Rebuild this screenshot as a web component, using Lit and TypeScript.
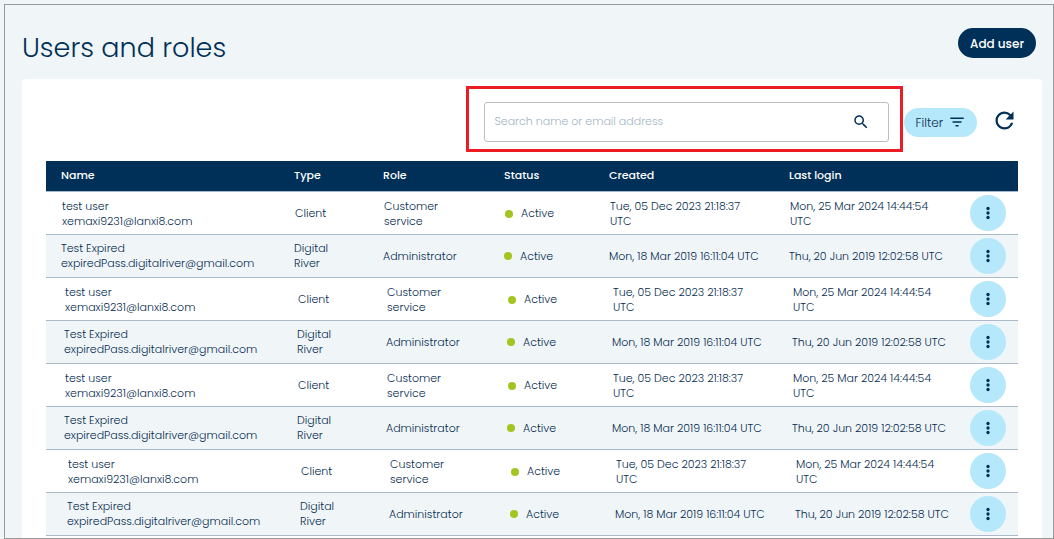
import { LitElement, html, css } from "lit";
import { customElement, state } from "lit/decorators.js";
import { classMap } from "lit/directives/class-map.js";

interface User {
  name: string;
  email: string;
  type: string[];
  role: string[];
  created: string[];
  lastLogin: string[];
}

const testUser: User = {
  name: "test user",
  email: "xemaxi9231@lanxi8.com",
  type: ["Client"],
  role: ["Customer", "service"],
  created: ["Tue, 05 Dec 2023 21:18:37", "UTC"],
  lastLogin: ["Mon, 25 Mar 2024 14:44:54", "UTC"],
};

const expiredUser: User = {
  name: "Test Expired",
  email: "expiredPass.digitalriver@gmail.com",
  type: ["Digital", "River"],
  role: ["Administrator"],
  created: ["Mon, 18 Mar 2019 16:11:04 UTC"],
  lastLogin: ["Thu, 20 Jun 2019 12:02:58 UTC"],
};

const batches: { user: User; step: number }[] = [
  { user: testUser, step: 0 },
  { user: expiredUser, step: 0 },
  { user: testUser, step: 1 },
  { user: expiredUser, step: 1 },
  { user: testUser, step: 1 },
  { user: expiredUser, step: 1 },
  { user: testUser, step: 2 },
  { user: expiredUser, step: 2 },
];

const lines = (parts: string[]) =>
  parts.map((part) => html`<span class="line">${part}</span>`);

@customElement("app-root")
export class AppRoot extends LitElement {
  @state() private query = "";

  static styles = css`
    :host {
      display: block;
      box-sizing: border-box;
      min-height: 100vh;
      padding: 4px 0 0 4px;
      background: #f0f5f8;
      color: #062c50;
      font-family: Poppins, Inter, "Open Sans", sans-serif;
      font-size: 11px;
      font-weight: 300;
      line-height: 15px;
    }
    * {
      box-sizing: border-box;
    }
    button,
    input {
      font: inherit;
      color: inherit;
    }
    button {
      border: 0;
      padding: 0;
      cursor: pointer;
    }
    svg {
      display: block;
      fill: #003057;
    }
    .frame {
      display: flex;
      flex-direction: column;
      min-height: calc(100vh - 4px);
      border: 1px solid #999;
      padding: 0 11px 0 17px;
    }
    .head {
      display: flex;
      align-items: flex-start;
      justify-content: space-between;
      padding: 23px 6px 11px 0;
    }
    h1 {
      margin: 0;
      font-size: 27px;
      line-height: 40px;
      font-weight: 300;
      color: #003057;
    }
    .add {
      height: 30px;
      padding: 0 12px;
      border-radius: 15px;
      background: #003057;
      color: #fff;
      font-size: 12px;
      font-weight: 500;
    }
    .card {
      flex: 1;
      padding: 23px 24px 0;
      border-radius: 4px 4px 0 0;
      background: #fff;
    }
    .tools {
      display: flex;
      align-items: center;
      justify-content: flex-end;
      margin-bottom: 19px;
    }
    .search {
      position: relative;
      display: flex;
      align-items: center;
      flex: 0 1 405px;
      height: 40px;
      margin-right: 15px;
      padding: 0 18px 0 10px;
      border: 1px solid #bdbdbd;
      border-radius: 3px;
    }
    .marker {
      position: absolute;
      inset: -17px -15px -11px -19px;
      border: 3px solid #ed1c24;
      pointer-events: none;
    }
    .search input {
      flex: 1;
      min-width: 0;
      border: 0;
      padding: 0 0 2px;
      outline: 0;
      background: none;
    }
    .search input::placeholder {
      color: #a3b4c4;
      opacity: 1;
    }
    .plain {
      background: none;
    }
    .filter {
      display: flex;
      align-items: center;
      gap: 5px;
      height: 29px;
      margin-right: 14px;
      padding: 0 11px 0 12px;
      border-radius: 15px;
      background: #b5e8fb;
      font-size: 12px;
    }
    .refresh {
      align-self: flex-start;
      padding-top: 5px;
    }
    table {
      width: 100%;
      table-layout: fixed;
      border-collapse: separate;
      border-spacing: 0;
    }
    th {
      height: 31px;
      padding: 0 0 2px 15px;
      border-bottom: 1px solid #a9b9c8;
      background: #003057;
      color: #fff;
      font-weight: 500;
      text-align: left;
    }
    td {
      height: 43px;
      padding: 1px 0 0 16px;
      border-bottom: 1px solid #a9b9c8;
      white-space: nowrap;
    }
    .even td {
      padding: 0 0 0 15px;
      background: #f0f5f8;
    }
    .step-1 td {
      padding-left: 19px;
    }
    .step-1.even td {
      padding-left: 18px;
    }
    .step-2 td {
      padding-left: 22px;
    }
    .step-2.even td {
      padding-left: 21px;
    }
    table tbody tr td:last-child {
      padding: 0 12px 0 0;
    }
    .line {
      display: block;
    }
    .status {
      display: flex;
      align-items: center;
      gap: 8px;
    }
    .status::before {
      content: "";
      width: 8px;
      height: 8px;
      border-radius: 50%;
      background: #a4c520;
    }
    tbody .more {
      display: grid;
      place-items: center;
      width: 36px;
      height: 36px;
      margin-left: auto;
      border-radius: 50%;
      background: #b5e8fb;
    }
    .w-name { width: 233px; }
    .w-type { width: 89px; }
    .w-role { width: 121px; }
    .w-status { width: 105px; }
    .w-date { width: 180px; }
    .w-action { width: 64px; }
    tr.row td.action {
      padding: 0 12px 0 0;
    }
  `;

  private onInput(e: Event) {
    this.query = (e.target as HTMLInputElement).value;
  }

  private row({ user, step }: { user: User; step: number }, index: number) {
    const classes = {
      row: true,
      even: index % 2 === 1,
      "step-1": step === 1,
      "step-2": step === 2,
    };
    return html`
      <tr class=${classMap(classes)}>
        <td>${lines([user.name, user.email])}</td>
        <td>${lines(user.type)}</td>
        <td>${lines(user.role)}</td>
        <td><span class="status">Active</span></td>
        <td>${lines(user.created)}</td>
        <td>${lines(user.lastLogin)}</td>
        <td class="action">
          <button class="more" type="button" aria-label="More actions">
            <svg width="18" height="18" viewBox="0 0 24 24">
              <circle cx="12" cy="6" r="2.2" />
              <circle cx="12" cy="12" r="2.2" />
              <circle cx="12" cy="18" r="2.2" />
            </svg>
          </button>
        </td>
      </tr>
    `;
  }

  render() {
    return html`
      <main class="frame">
        <header class="head">
          <h1>Users and roles</h1>
          <button class="add" type="button">Add user</button>
        </header>
        <section class="card">
          <div class="tools">
            <div class="search">
              <input
                type="text"
                aria-label="Search name or email address"
                placeholder="Search name or email address"
                .value=${this.query}
                @input=${this.onInput}
              />
              <button class="plain" type="button" aria-label="Search">
                <svg width="18" height="18" viewBox="0 0 24 24">
                  <path d="M15.5 14h-.79l-.28-.27A6.47 6.47 0 0 0 16 9.5 6.5 6.5 0 1 0 9.5 16c1.61 0 3.09-.59 4.23-1.57l.27.28v.79l5 4.99L20.49 19l-4.99-5zm-6 0C7.01 14 5 11.99 5 9.5S7.01 5 9.5 5 14 7.01 14 9.5 11.99 14 9.5 14z" />
                </svg>
              </button>
              <span class="marker"></span>
            </div>
            <button class="filter" type="button">
              Filter
              <svg width="18" height="18" viewBox="0 0 24 24">
                <path d="M10 18h4v-2h-4v2zM3 6v2h18V6H3zm3 7h12v-2H6v2z" />
              </svg>
            </button>
            <button class="plain refresh" type="button" aria-label="Refresh">
              <svg width="27" height="27" viewBox="0 0 24 24">
                <path d="M17.65 6.35A7.958 7.958 0 0 0 12 4c-4.42 0-7.99 3.58-7.99 8s3.57 8 7.99 8c3.73 0 6.84-2.55 7.73-6h-2.08A5.99 5.99 0 0 1 12 18c-3.31 0-6-2.69-6-6s2.69-6 6-6c1.66 0 3.14.69 4.22 1.78L13 11h7V4l-2.35 2.35z" />
              </svg>
            </button>
          </div>
          <table>
            <colgroup>
              <col class="w-name" />
              <col class="w-type" />
              <col class="w-role" />
              <col class="w-status" />
              <col class="w-date" />
              <col class="w-date" />
              <col class="w-action" />
            </colgroup>
            <thead>
              <tr>
                <th>Name</th>
                <th>Type</th>
                <th>Role</th>
                <th>Status</th>
                <th>Created</th>
                <th>Last login</th>
                <th></th>
              </tr>
            </thead>
            <tbody>
              ${batches.map((entry, i) => this.row(entry, i))}
            </tbody>
          </table>
        </section>
      </main>
    `;
  }
}
